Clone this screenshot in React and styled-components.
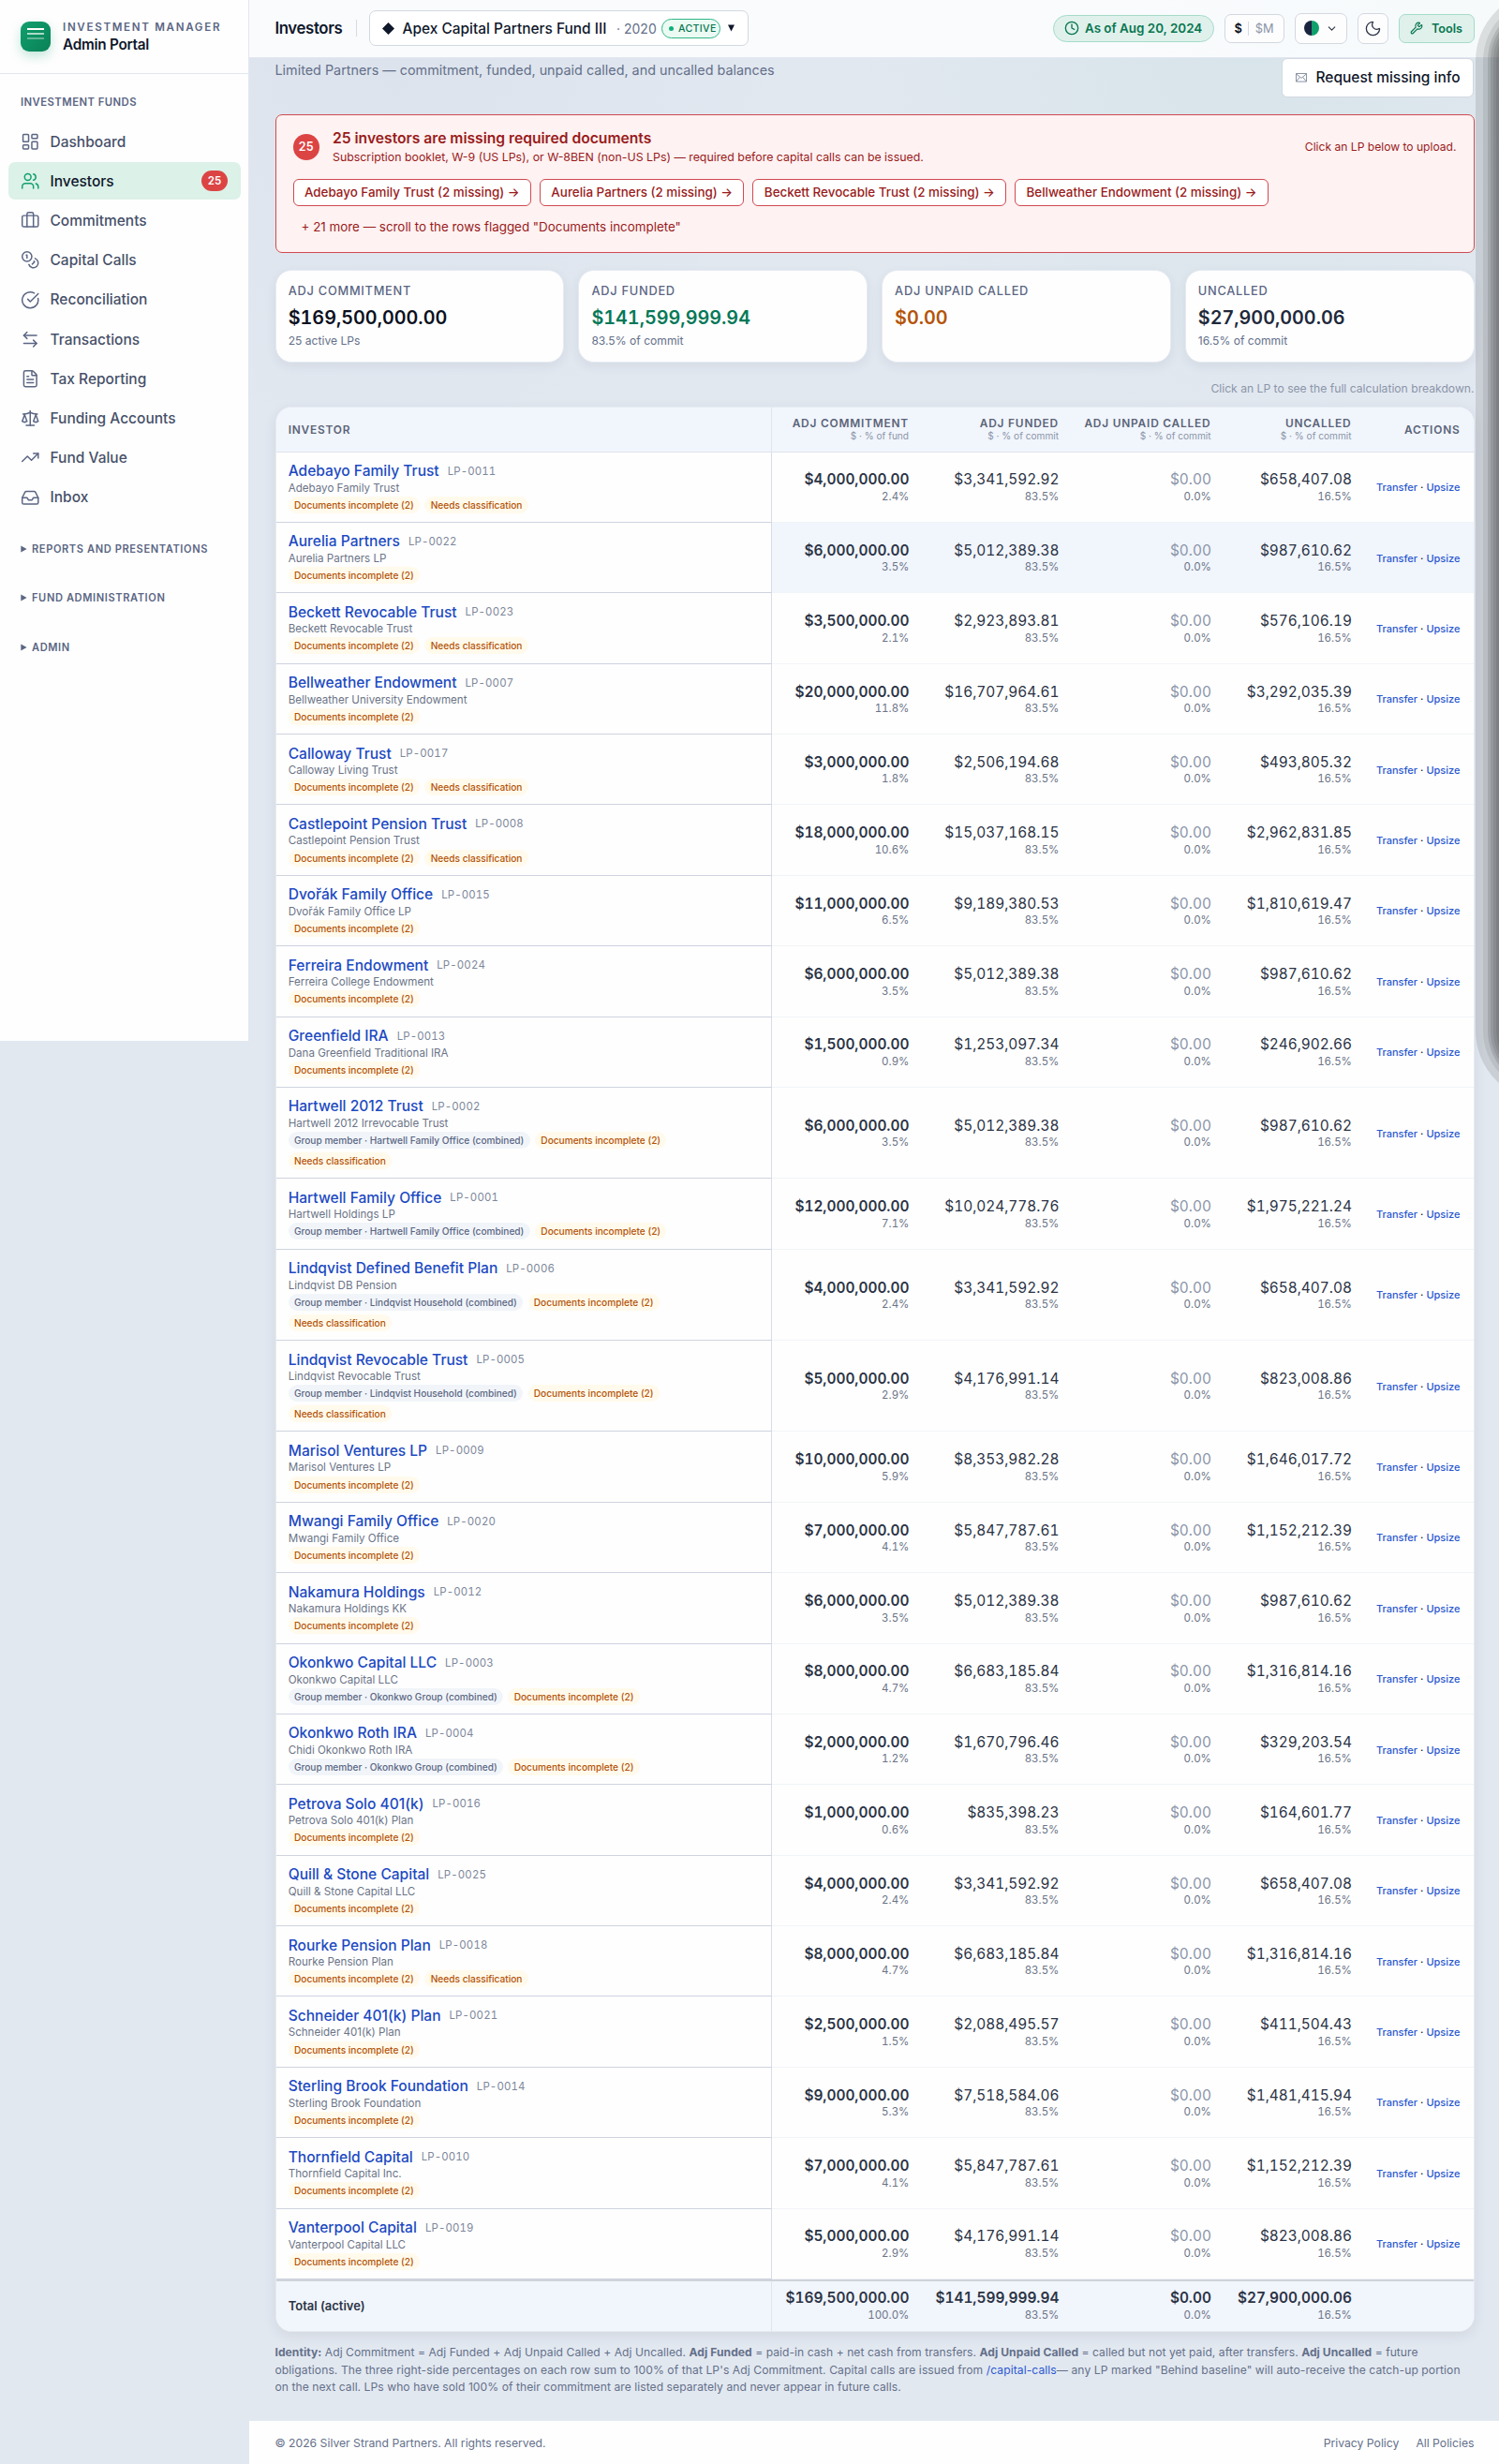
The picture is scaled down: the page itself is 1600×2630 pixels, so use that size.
import React from "react";
import styled, { createGlobalStyle } from "styled-components";
import {
  LayoutDashboard,
  Users,
  Briefcase,
  Coins,
  CircleCheckBig,
  ArrowLeftRight,
  FileText,
  Scale,
  TrendingUp,
  Inbox,
  Clock,
  ChevronDown,
  Moon,
  Wrench,
} from "lucide-react";

const navItems = [
  { label: "Dashboard", icon: LayoutDashboard },
  { label: "Investors", icon: Users, active: true, count: 25 },
  { label: "Commitments", icon: Briefcase },
  { label: "Capital Calls", icon: Coins },
  { label: "Reconciliation", icon: CircleCheckBig },
  { label: "Transactions", icon: ArrowLeftRight },
  { label: "Tax Reporting", icon: FileText },
  { label: "Funding Accounts", icon: Scale },
  { label: "Fund Value", icon: TrendingUp },
  { label: "Inbox", icon: Inbox },
];

const navGroups = ["Reports and Presentations", "Fund Administration", "Admin"];

const missing = [
  "Adebayo Family Trust",
  "Aurelia Partners",
  "Beckett Revocable Trust",
  "Bellweather Endowment",
];

const stats = [
  { label: "Adj Commitment", value: "$169,500,000.00", note: "25 active LPs", color: "#0b1020" },
  { label: "Adj Funded", value: "$141,599,999.94", note: "83.5% of commit", color: "#047857" },
  { label: "Adj Unpaid Called", value: "$0.00", note: "", color: "#b45309" },
  { label: "Uncalled", value: "$27,900,000.06", note: "16.5% of commit", color: "#1e293b" },
];

const columns = [
  { label: "Adj Commitment", note: "$ · % of fund" },
  { label: "Adj Funded", note: "$ · % of commit" },
  { label: "Adj Unpaid Called", note: "$ · % of commit" },
  { label: "Uncalled", note: "$ · % of commit" },
];

// name, id, legal name, group, needs classification, commitment, % of fund, funded, uncalled
const investors = [
  ["Adebayo Family Trust", "LP-0011", "Adebayo Family Trust", "", true, "$4,000,000.00", "2.4%", "$3,341,592.92", "$658,407.08"],
  ["Aurelia Partners", "LP-0022", "Aurelia Partners LP", "", false, "$6,000,000.00", "3.5%", "$5,012,389.38", "$987,610.62"],
  ["Beckett Revocable Trust", "LP-0023", "Beckett Revocable Trust", "", true, "$3,500,000.00", "2.1%", "$2,923,893.81", "$576,106.19"],
  ["Bellweather Endowment", "LP-0007", "Bellweather University Endowment", "", false, "$20,000,000.00", "11.8%", "$16,707,964.61", "$3,292,035.39"],
  ["Calloway Trust", "LP-0017", "Calloway Living Trust", "", true, "$3,000,000.00", "1.8%", "$2,506,194.68", "$493,805.32"],
  ["Castlepoint Pension Trust", "LP-0008", "Castlepoint Pension Trust", "", true, "$18,000,000.00", "10.6%", "$15,037,168.15", "$2,962,831.85"],
  ["Dvořák Family Office", "LP-0015", "Dvořák Family Office LP", "", false, "$11,000,000.00", "6.5%", "$9,189,380.53", "$1,810,619.47"],
  ["Ferreira Endowment", "LP-0024", "Ferreira College Endowment", "", false, "$6,000,000.00", "3.5%", "$5,012,389.38", "$987,610.62"],
  ["Greenfield IRA", "LP-0013", "Dana Greenfield Traditional IRA", "", false, "$1,500,000.00", "0.9%", "$1,253,097.34", "$246,902.66"],
  ["Hartwell 2012 Trust", "LP-0002", "Hartwell 2012 Irrevocable Trust", "Hartwell Family Office", true, "$6,000,000.00", "3.5%", "$5,012,389.38", "$987,610.62"],
  ["Hartwell Family Office", "LP-0001", "Hartwell Holdings LP", "Hartwell Family Office", false, "$12,000,000.00", "7.1%", "$10,024,778.76", "$1,975,221.24"],
  ["Lindqvist Defined Benefit Plan", "LP-0006", "Lindqvist DB Pension", "Lindqvist Household", true, "$4,000,000.00", "2.4%", "$3,341,592.92", "$658,407.08"],
  ["Lindqvist Revocable Trust", "LP-0005", "Lindqvist Revocable Trust", "Lindqvist Household", true, "$5,000,000.00", "2.9%", "$4,176,991.14", "$823,008.86"],
  ["Marisol Ventures LP", "LP-0009", "Marisol Ventures LP", "", false, "$10,000,000.00", "5.9%", "$8,353,982.28", "$1,646,017.72"],
  ["Mwangi Family Office", "LP-0020", "Mwangi Family Office", "", false, "$7,000,000.00", "4.1%", "$5,847,787.61", "$1,152,212.39"],
  ["Nakamura Holdings", "LP-0012", "Nakamura Holdings KK", "", false, "$6,000,000.00", "3.5%", "$5,012,389.38", "$987,610.62"],
  ["Okonkwo Capital LLC", "LP-0003", "Okonkwo Capital LLC", "Okonkwo Group", false, "$8,000,000.00", "4.7%", "$6,683,185.84", "$1,316,814.16"],
  ["Okonkwo Roth IRA", "LP-0004", "Chidi Okonkwo Roth IRA", "Okonkwo Group", false, "$2,000,000.00", "1.2%", "$1,670,796.46", "$329,203.54"],
  ["Petrova Solo 401(k)", "LP-0016", "Petrova Solo 401(k) Plan", "", false, "$1,000,000.00", "0.6%", "$835,398.23", "$164,601.77"],
  ["Quill & Stone Capital", "LP-0025", "Quill & Stone Capital LLC", "", false, "$4,000,000.00", "2.4%", "$3,341,592.92", "$658,407.08"],
  ["Rourke Pension Plan", "LP-0018", "Rourke Pension Plan", "", true, "$8,000,000.00", "4.7%", "$6,683,185.84", "$1,316,814.16"],
  ["Schneider 401(k) Plan", "LP-0021", "Schneider 401(k) Plan", "", false, "$2,500,000.00", "1.5%", "$2,088,495.57", "$411,504.43"],
  ["Sterling Brook Foundation", "LP-0014", "Sterling Brook Foundation", "", false, "$9,000,000.00", "5.3%", "$7,518,584.06", "$1,481,415.94"],
  ["Thornfield Capital", "LP-0010", "Thornfield Capital Inc.", "", false, "$7,000,000.00", "4.1%", "$5,847,787.61", "$1,152,212.39"],
  ["Vanterpool Capital", "LP-0019", "Vanterpool Capital LLC", "", false, "$5,000,000.00", "2.9%", "$4,176,991.14", "$823,008.86"],
];

function Sidebar() {
  return (
    <SidebarStyle>
      <Brand>
        <Logo>
          <i />
          <i />
          <i />
        </Logo>
        <div>
          <BrandOver>Investment Manager</BrandOver>
          <BrandName>Admin Portal</BrandName>
        </div>
      </Brand>
      <NavHeading>Investment Funds</NavHeading>
      <Nav>
        {navItems.map(({ label, icon: Icon, active, count }) => (
          <NavItem key={label} $active={active}>
            <Icon size={20.5} strokeWidth={1.75} />
            <span>{label}</span>
            {count && <NavCount>{count}</NavCount>}
          </NavItem>
        ))}
      </Nav>
      <NavGroups>
        {navGroups.map((group) => (
          <NavGroup key={group}>
            <svg width="7" height="8" viewBox="0 0 7 8">
              <path d="M0.3 0.6 6.6 4 0.3 7.4Z" fill="currentColor" />
            </svg>
            {group}
          </NavGroup>
        ))}
      </NavGroups>
    </SidebarStyle>
  );
}

function Header() {
  return (
    <HeaderStyle>
      <PageTitle>Investors</PageTitle>
      <Divider />
      <FundSelect>
        <Diamond viewBox="0 0 12 12">
          <path d="M6 0 12 6 6 12 0 6Z" fill="currentColor" />
        </Diamond>
        <FundName>Apex Capital Partners Fund III</FundName>
        <FundYear>· 2020</FundYear>
        <ActiveBadge>Active</ActiveBadge>
        <svg width="7" height="8" viewBox="0 0 7 8">
          <path d="M0 0.4 7 0.4 3.5 7.6Z" fill="currentColor" />
        </svg>
      </FundSelect>
      <Tools>
        <AsOf>
          <Clock size={16} strokeWidth={2} />
          As of Aug 20, 2024
        </AsOf>
        <Units>
          <b>$</b>
          <i />
          <span>$M</span>
        </Units>
        <ThemeButton>
          <HalfCircle />
          <ChevronDown size={13} strokeWidth={2} />
        </ThemeButton>
        <MoonButton>
          <Moon size={19} strokeWidth={1.6} />
        </MoonButton>
        <ToolsButton>
          <Wrench size={14} strokeWidth={2} />
          Tools
        </ToolsButton>
      </Tools>
    </HeaderStyle>
  );
}

function MissingAlert() {
  return (
    <Alert>
      <AlertTop>
        <AlertCount>25</AlertCount>
        <div>
          <AlertTitle>25 investors are missing required documents</AlertTitle>
          <AlertText>
            Subscription booklet, W-9 (US LPs), or W-8BEN (non-US LPs) — required before capital
            calls can be issued.
          </AlertText>
        </div>
        <AlertHint>Click an LP below to upload.</AlertHint>
      </AlertTop>
      <AlertLinks>
        {missing.map((name) => (
          <AlertLink key={name}>{name} (2 missing) →</AlertLink>
        ))}
      </AlertLinks>
      <AlertMore>+ 21 more — scroll to the rows flagged "Documents incomplete"</AlertMore>
    </Alert>
  );
}

function InvestorRow({ data, highlight }) {
  const [name, id, legal, group, classify, commitment, share, funded, uncalled] = data;
  return (
    <Row $tall={group && classify}>
      <InvestorCell>
        <NameLine>
          <a>{name}</a>
          <small>{id}</small>
        </NameLine>
        <Legal>{legal}</Legal>
        <Tags>
          {group && <Tag $muted>Group member · {group} (combined)</Tag>}
          <Tag>Documents incomplete (2)</Tag>
          {classify && <Tag>Needs classification</Tag>}
        </Tags>
      </InvestorCell>
      <Amount $strong value={commitment} note={share} $on={highlight} />
      <Amount value={funded} note="83.5%" $on={highlight} />
      <Amount $dim value="$0.00" note="0.0%" $on={highlight} />
      <Amount value={uncalled} note="16.5%" $on={highlight} />
      <ActionCell $on={highlight}>
        <a>Transfer</a> · <a>Upsize</a>
      </ActionCell>
    </Row>
  );
}

function Amount({ value, note, $strong, $dim, $on, $total }) {
  return (
    <AmountCell $on={$on} $total={$total}>
      <AmountValue $strong={$strong} $dim={$dim}>
        {value}
      </AmountValue>
      <AmountNote $total={$total}>{note}</AmountNote>
    </AmountCell>
  );
}

export default function App() {
  return (
    <>
      <GlobalStyle />
      <Page>
        <Sidebar />
        <Main>
          <Header />
          <Content>
            <Intro>
              <p>Limited Partners — commitment, funded, unpaid called, and uncalled balances</p>
              <RequestButton>
                <svg width="12" height="10" viewBox="0 0 12 10" fill="none" stroke="currentColor">
                  <path d="M0.5 0.5h11v8.6h-11z M0.5 0.8 6 5.4l5.5-4.6 M0.7 8.9 4.4 4.3 M11.3 8.9 7.6 4.3" strokeWidth="0.9" />
                </svg>
                Request missing info
              </RequestButton>
            </Intro>
            <MissingAlert />
            <Stats>
              {stats.map((stat) => (
                <Stat key={stat.label}>
                  <StatLabel>{stat.label}</StatLabel>
                  <StatValue $color={stat.color}>{stat.value}</StatValue>
                  <StatNote>{stat.note}</StatNote>
                </Stat>
              ))}
            </Stats>
            <TableHint>Click an LP to see the full calculation breakdown.</TableHint>
            <Table>
              <HeadRow>
                <HeadCell $first>Investor</HeadCell>
                {columns.map((col) => (
                  <HeadCell key={col.label}>
                    {col.label}
                    <small>{col.note}</small>
                  </HeadCell>
                ))}
                <HeadCell>Actions</HeadCell>
              </HeadRow>
              {investors.map((data, i) => (
                <InvestorRow key={data[1]} data={data} highlight={i === 1} />
              ))}
              <TotalRow>
                <TotalLabel>Total (active)</TotalLabel>
                <Amount $strong $total value="$169,500,000.00" note="100.0%" />
                <Amount $strong $total value="$141,599,999.94" note="83.5%" />
                <Amount $strong $total value="$0.00" note="0.0%" />
                <Amount $strong $total value="$27,900,000.06" note="16.5%" />
              </TotalRow>
            </Table>
            <Footnote>
              <Line $track={0.045}>
                <b>Identity:</b> Adj Commitment = Adj Funded + Adj Unpaid Called + Adj Uncalled.{" "}
                <b>Adj Funded</b> = paid-in cash + net cash from transfers.{" "}
                <b>Adj Unpaid Called</b> = called but not yet paid, after transfers.{" "}
                <b>Adj Uncalled</b> = future
              </Line>
              <Line $track={0.088}>
                obligations. The three right-side percentages on each row sum to 100% of that LP's
                Adj Commitment. Capital calls are issued from <a>/capital-calls</a>— any LP marked
                "Behind baseline" will auto-receive the catch-up portion
              </Line>
              <Line $track={0.06}>
                on the next call. LPs who have sold 100% of their commitment are listed separately
                and never appear in future calls.
              </Line>
            </Footnote>
          </Content>
          <Footer>
            <span>© 2026 Silver Strand Partners. All rights reserved.</span>
            <div>
              <a>Privacy Policy</a>
              <a>All Policies</a>
            </div>
          </Footer>
        </Main>
        <DrawerEdge>
          <Drawer />
        </DrawerEdge>
      </Page>
    </>
  );
}

const GlobalStyle = createGlobalStyle`
  * {
    box-sizing: border-box;
  }
  body {
    margin: 0;
    background: #e2e8f0;
    font-family: Inter, "Liberation Sans", sans-serif;
    color: #0f172a;
  }
  p {
    margin: 0;
  }
`;

const Page = styled.div`
  position: relative;
  display: flex;
  align-items: flex-start;
  width: 1600px;
  height: 2630px;
  overflow: hidden;
  background: radial-gradient(circle at 1330px 40px, rgba(16, 160, 120, 0.05), transparent 420px),
    radial-gradient(circle at 420px 60px, rgba(70, 90, 150, 0.035), transparent 420px), #e2e8f0;
`;

const SidebarStyle = styled.aside`
  flex: none;
  width: 266px;
  height: 1111px;
  background: #fefefe;
  border-right: 1px solid #e2e8f0;
`;

const Brand = styled.div`
  display: flex;
  gap: 13px;
  height: 79px;
  padding: 23px 0 0 22px;
  border-bottom: 1px solid #e2e8f0;
`;

const Logo = styled.div`
  display: flex;
  flex-direction: column;
  align-items: center;
  gap: 3px;
  width: 32px;
  height: 32px;
  padding-top: 7px;
  border-radius: 9px;
  background: linear-gradient(135deg, #10a06d, #0a8158);
  box-shadow: 0 5px 12px rgba(16, 160, 110, 0.25);
  i {
    width: 18px;
    height: 2px;
    background: #fff;
  }
  i:nth-child(2) {
    opacity: 0.65;
  }
  i:nth-child(3) {
    opacity: 0.35;
  }
`;

const BrandOver = styled.div`
  font-size: 11.6px;
  font-weight: 600;
  line-height: 12px;
  letter-spacing: 1.68px;
  text-transform: uppercase;
  white-space: nowrap;
  color: #5b6684;
`;

const BrandName = styled.div`
  margin-top: 4px;
  font-size: 15.3px;
  font-weight: 600;
  line-height: 18px;
  letter-spacing: -0.25px;
`;

const NavHeading = styled.div`
  padding: 22px 22px 0;
  font-size: 11.3px;
  font-weight: 600;
  line-height: 17px;
  letter-spacing: 0.45px;
  text-transform: uppercase;
  color: #5b6684;
`;

const Nav = styled.nav`
  display: flex;
  flex-direction: column;
  gap: 2px;
  padding: 13px 8px 0 9px;
`;

const NavItem = styled.a`
  display: flex;
  align-items: center;
  height: 40.2px;
  padding: 0 14px 0 13px;
  border-radius: 7px;
  background: ${({ $active }) => ($active ? "#dcf1e8" : "transparent")};
  font-size: 15.5px;
  font-weight: 500;
  color: ${({ $active }) => ($active ? "#0f172a" : "#475069")};
  span {
    margin-left: 11px;
  }
  svg {
    color: ${({ $active }) => ($active ? "#10a06d" : "#5b6684")};
  }
`;

const NavCount = styled.b`
  width: 28px;
  margin-left: auto;
  border-radius: 12px;
  background: #dc4444;
  font-size: 11.5px;
  font-weight: 600;
  line-height: 22.4px;
  text-align: center;
  color: #fff;
`;

const NavGroups = styled.div`
  display: flex;
  flex-direction: column;
  gap: 32.2px;
  padding: 25.3px 22px;
`;

const NavGroup = styled.div`
  display: flex;
  align-items: center;
  gap: 5px;
  font-size: 11.1px;
  font-weight: 600;
  line-height: 20px;
  letter-spacing: 0.6px;
  text-transform: uppercase;
  color: #5b6684;
`;

const Main = styled.main`
  flex: 1;
  display: flex;
  flex-direction: column;
  height: 2630px;
`;

const HeaderStyle = styled.header`
  display: flex;
  align-items: center;
  height: 61.5px;
  padding: 0 26.5px 0 27.5px;
  border-bottom: 1px solid #e2e8f0;
  background: linear-gradient(90deg, #fafbfd, #f9fbfd 70%, #f6fafb);
`;

const PageTitle = styled.h1`
  width: 86px;
  margin: 0;
  font-size: 16.8px;
  font-weight: 600;
  letter-spacing: -0.38px;
`;

const Divider = styled.i`
  width: 1px;
  height: 18px;
  margin-right: 13px;
  background: #d5dae3;
`;

const FundSelect = styled.div`
  display: flex;
  align-items: center;
  width: 405.5px;
  height: 38px;
  padding-left: 13px;
  border: 1px solid #d3d8e0;
  border-radius: 7px;
  background: #fff;
`;

const Diamond = styled.svg`
  width: 13px;
  height: 13px;
  margin-right: 9px;
`;

const FundName = styled.span`
  width: 228.5px;
  font-size: 15.45px;
  font-weight: 500;
  white-space: nowrap;
`;

const FundYear = styled.span`
  width: 48px;
  font-size: 14px;
  color: #64708a;
  white-space: nowrap;
`;

const ActiveBadge = styled.span`
  display: flex;
  align-items: center;
  gap: 5px;
  width: 63px;
  height: 21px;
  margin-right: 8px;
  padding-left: 7px;
  border: 1px solid #2fb585;
  border-radius: 11px;
  background: #ecfaf4;
  font-size: 10.6px;
  font-weight: 500;
  letter-spacing: 0.35px;
  text-transform: uppercase;
  color: #08764f;
  &::before {
    content: "";
    width: 5px;
    height: 5px;
    border-radius: 50%;
    background: #10b07a;
  }
`;

const Tools = styled.div`
  display: flex;
  align-items: center;
  gap: 11px;
  margin-left: auto;
`;

const AsOf = styled.div`
  display: flex;
  align-items: center;
  gap: 6.5px;
  width: 172px;
  height: 29px;
  padding-left: 11px;
  border: 1px solid #a5dcc8;
  border-radius: 15px;
  background: #e0f1ec;
  font-size: 13.4px;
  font-weight: 600;
  color: #08764f;
  white-space: nowrap;
`;

const Box = styled.div`
  display: flex;
  align-items: center;
  justify-content: center;
  height: 33.5px;
  border: 1px solid #d3d8e0;
  border-radius: 7px;
  background: #fdfdfe;
  color: #2b3345;
`;

const Units = styled(Box)`
  gap: 6.5px;
  width: 64px;
  height: 30.5px;
  font-size: 12.8px;
  b {
    font-weight: 600;
    color: #0b1020;
  }
  i {
    width: 1px;
    height: 15px;
    background: #d5dae3;
  }
  span {
    color: #8b95a9;
  }
`;

const ThemeButton = styled(Box)`
  gap: 7px;
  width: 56px;
`;

const HalfCircle = styled.i`
  width: 16px;
  height: 16px;
  border-radius: 50%;
  background: linear-gradient(90deg, #1b2340 50%, #10a06d 50%);
`;

const MoonButton = styled(Box)`
  width: 33px;
`;

const ToolsButton = styled(Box)`
  gap: 9px;
  width: 81px;
  height: 30.5px;
  border-color: #a5dcc8;
  background: #e0f1ec;
  font-size: 12.7px;
  font-weight: 600;
  color: #08764f;
`;

const Content = styled.div`
  flex: 1;
  padding: 0 26.5px 0 27.5px;
`;

const Intro = styled.div`
  display: flex;
  justify-content: space-between;
  height: 60.5px;
  p {
    padding-top: 3px;
    font-size: 14.37px;
    line-height: 20px;
    color: #64708a;
  }
`;

const RequestButton = styled.div`
  display: flex;
  align-items: center;
  gap: 10px;
  width: 205px;
  height: 41.5px;
  margin: 0.5px 0.5px 0 0;
  padding-left: 13.5px;
  border: 1px solid #d3d8e0;
  border-radius: 6px;
  background: #fff;
  font-size: 15.5px;
  font-weight: 500;
  white-space: nowrap;
  svg {
    color: #7d879b;
  }
`;

const Alert = styled.section`
  height: 148px;
  padding: 14px 18px;
  border: 1px solid #cf4a50;
  border-radius: 7px;
  background: #fef2f2;
  color: #991b1b;
`;

const AlertTop = styled.div`
  display: flex;
  height: 54px;
`;

const AlertCount = styled.div`
  width: 28.5px;
  height: 28px;
  margin: 5.5px 14px 0 0;
  border-radius: 50%;
  background: #dc4444;
  font-size: 12.6px;
  font-weight: 600;
  line-height: 28px;
  text-align: center;
  color: #fff;
`;

const AlertTitle = styled.div`
  font-size: 15.65px;
  font-weight: 600;
  line-height: 22px;
`;

const AlertText = styled.div`
  font-size: 12.35px;
  line-height: 18px;
`;

const AlertHint = styled.div`
  margin-left: auto;
  padding-top: 11px;
  font-size: 12.1px;
  line-height: 18px;
`;

const AlertLinks = styled.div`
  display: flex;
  gap: 9px;
`;

const AlertLink = styled.a`
  height: 29px;
  padding: 0 11.4px;
  border: 1px solid #cf4a50;
  border-radius: 6px;
  background: #fff;
  font-size: 13.4px;
  font-weight: 500;
  line-height: 27px;
  white-space: nowrap;
`;

const AlertMore = styled.div`
  padding: 12px 9px 0;
  font-size: 13.4px;
  line-height: 20px;
`;

const Stats = styled.div`
  display: grid;
  grid-template-columns: repeat(4, 1fr);
  gap: 14.8px;
  margin-top: 18px;
`;

const Stat = styled.div`
  height: 99px;
  padding: 14px 13.2px;
  border: 1px solid #e6ebf2;
  border-radius: 17px;
  background: #fefefe;
  box-shadow: 0 4px 12px rgba(30, 41, 70, 0.07);
`;

const StatLabel = styled.div`
  font-size: 12.8px;
  font-weight: 500;
  line-height: 16px;
  letter-spacing: 0.75px;
  text-transform: uppercase;
  color: #5b6684;
`;

const StatValue = styled.div`
  margin-top: 6px;
  font-size: 19.8px;
  font-weight: 600;
  line-height: 28px;
  font-variant-numeric: tabular-nums;
  color: ${({ $color }) => $color};
`;

const StatNote = styled.div`
  margin-top: 3px;
  font-size: 12.1px;
  line-height: 16px;
  color: #64708a;
`;

const TableHint = styled.div`
  height: 47px;
  padding-top: 18.5px;
  font-size: 12.15px;
  line-height: 18px;
  text-align: right;
  color: #8b95a9;
`;

const Table = styled.section`
  overflow: hidden;
  border: 1px solid #e6ebf2;
  border-radius: 17px;
  background: #fefefe;
  box-shadow: 0 4px 14px rgba(30, 41, 70, 0.09);
`;

const Row = styled.div`
  display: grid;
  grid-template-columns: 529.5px 160px 160px 162.5px 150px 1fr;
  height: ${({ $tall }) => ($tall ? "97.4px" : "75.38px")};
`;

const HeadRow = styled(Row)`
  height: 47.5px;
  background: #f1f5fc;
  border-bottom: 1px solid #dfe4ed;
`;

const HeadCell = styled.div`
  display: flex;
  flex-direction: column;
  justify-content: center;
  padding: 0 14px 0 13.2px;
  border-right: ${({ $first }) => ($first ? "1px solid #dfe4ed" : "0")};
  font-size: 11.9px;
  font-weight: 600;
  line-height: 15px;
  letter-spacing: 0.8px;
  text-transform: uppercase;
  text-align: ${({ $first }) => ($first ? "left" : "right")};
  white-space: nowrap;
  color: #5b6478;
  small {
    font-size: 10.1px;
    font-weight: 400;
    line-height: 13px;
    letter-spacing: 0;
    text-transform: none;
    color: #8b95a9;
  }
`;

const InvestorCell = styled.div`
  padding: 10px 13.2px 0;
  border-right: 1.5px solid #d8dce6;
  border-bottom: 1.5px solid #ced3df;
`;

const NameLine = styled.div`
  display: flex;
  align-items: center;
  gap: 9px;
  height: 20px;
  a {
    font-size: 15.55px;
    font-weight: 500;
    color: #1d4ac2;
  }
  small {
    font-size: 11.4px;
    letter-spacing: 0.15px;
    font-variant-numeric: tabular-nums;
    color: #7d879b;
  }
`;

const Legal = styled.div`
  font-size: 11.6px;
  line-height: 16px;
  color: #6b7488;
`;

const Tags = styled.div`
  display: flex;
  flex-wrap: wrap;
  gap: 4px 5.4px;
  margin-top: 1.2px;
`;

const Tag = styled.span`
  height: 18px;
  padding: 0 6.3px;
  border-radius: 9px;
  background: ${({ $muted }) => ($muted ? "#f1f5f9" : "#fffaeb")};
  font-size: 10.12px;
  font-weight: 500;
  line-height: 18px;
  white-space: nowrap;
  color: ${({ $muted }) => ($muted ? "#5b6684" : "#b45309")};
`;

const AmountCell = styled.div`
  padding: ${({ $total }) => ($total ? "8.5px" : "2px")} 13.6px 0;
  display: flex;
  flex-direction: column;
  align-items: flex-end;
  justify-content: ${({ $total }) => ($total ? "flex-start" : "center")};
  border-bottom: ${({ $total }) => ($total ? "0" : "1px solid #f1f4f8")};
  background: ${({ $on }) => ($on ? "#f1f5fc" : "transparent")};
  font-variant-numeric: tabular-nums;
`;

const AmountValue = styled.div`
  font-size: 15.4px;
  font-weight: ${({ $strong }) => ($strong ? 600 : 400)};
  line-height: 20px;
  color: ${({ $dim }) => ($dim ? "#8b95a9" : "#2b3345")};
`;

const AmountNote = styled.div`
  margin-top: ${({ $total }) => ($total ? "0" : "-0.5px")};
  font-size: 11.5px;
  line-height: 17px;
  color: #6b7488;
`;

const ActionCell = styled.div`
  display: flex;
  align-items: center;
  justify-content: flex-end;
  gap: 3px;
  padding: 1px 14px 0 0;
  border-bottom: 1px solid #f1f4f8;
  background: ${({ $on }) => ($on ? "#f1f5fc" : "transparent")};
  font-size: 11px;
  font-weight: 500;
  white-space: nowrap;
  a {
    color: #2a58d0;
  }
`;

const TotalRow = styled(Row)`
  height: 55px;
  border-top: 2px solid #ced3da;
  background: #f1f5fc;
`;

const TotalLabel = styled.div`
  padding: 0 13.2px;
  border-right: 1px solid #dfe4ed;
  font-size: 13px;
  font-weight: 600;
  line-height: 53px;
  color: #2b3345;
`;

const Footnote = styled.div`
  padding-top: 13.5px;
  font-size: 12.1px;
  line-height: 18.3px;
  white-space: nowrap;
  color: #64708a;
  a {
    color: #2a58d0;
  }
`;

const Line = styled.p`
  letter-spacing: ${({ $track }) => $track || 0}px;
`;

const Footer = styled.footer`
  display: flex;
  align-items: center;
  justify-content: space-between;
  height: 46px;
  padding: 0 26.5px 0 27.5px;
  background: #fefefe;
  font-size: 12.2px;
  color: #64708a;
  div {
    display: flex;
    gap: 18px;
  }
`;

const DrawerEdge = styled.div`
  position: absolute;
  top: 0;
  right: 0;
  width: 40px;
  height: 1200px;
  overflow: hidden;
  pointer-events: none;
`;

/* closed drawer, only its stepped shadow reaches the page */
const Drawer = styled.div`
  width: 300px;
  height: 1135px;
  margin: 15px 0 0 40px;
  border-radius: 50px;
  box-shadow: 0 0 0 3px rgba(30, 30, 30, 0.1), 0 0 0 6px rgba(30, 30, 30, 0.1),
    0 0 0 9px rgba(30, 30, 30, 0.12), 0 0 0 12px rgba(40, 40, 40, 0.14),
    0 0 0 17px rgba(50, 50, 50, 0.1), 0 0 0 25px rgba(60, 60, 60, 0.14);
`;
